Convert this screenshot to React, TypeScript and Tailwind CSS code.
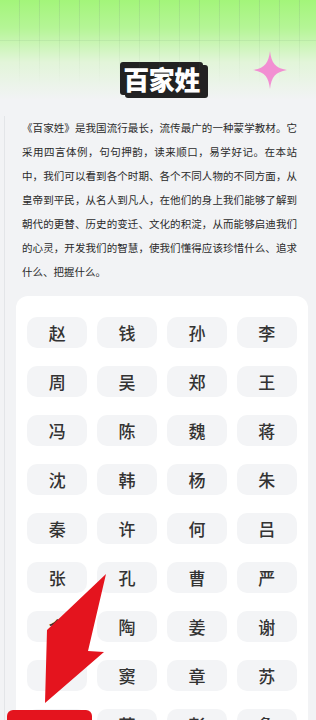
const surnames = [
  "赵", "钱", "孙", "李",
  "周", "吴", "郑", "王",
  "冯", "陈", "魏", "蒋",
  "沈", "韩", "杨", "朱",
  "秦", "许", "何", "吕",
  "张", "孔", "曹", "严",
  "金", "陶", "姜", "谢",
  "戚", "窦", "章", "苏",
  "范", "范", "彭", "鲁",
];

const introLines = [
  "《百家姓》是我国流行最长，流传最广的一种蒙学教材。它",
  "采用四言体例，句句押韵，读来顺口，易学好记。在本站",
  "中，我们可以看到各个时期、各个不同人物的不同方面，从",
  "皇帝到平民，从名人到凡人，在他们的身上我们能够了解到",
  "朝代的更替、历史的变迁、文化的积淀，从而能够启迪我们",
  "的心灵，开发我们的智慧，使我们懂得应该珍惜什么、追求",
];

function Sparkle() {
  return (
    <svg width="34" height="38" viewBox="0 0 34 38" className="absolute left-[253px] top-[51px]">
      <path d="M17 0 C18.5 12 22 17 34 19 C22 21 18.5 26 17 38 C15.5 26 12 21 0 19 C12 17 15.5 12 17 0 Z" fill="#f28fd2" />
    </svg>
  );
}

export default function App() {
  return (
    <div className="relative min-h-[720px] w-full overflow-hidden bg-[#f2f3f5] font-['Noto_Sans_CJK_SC','Noto_Sans',sans-serif] text-[#2b2b2b]">
      <div className="absolute left-[4px] top-0 h-full w-px bg-[#e3e5e8]" />
      <header className="relative h-[116px] bg-[linear-gradient(to_bottom,#a3f57a_0px,#b5f596_28px,#e2f5d9_62px,#f2f3f5_100px)]">
        <div className="absolute inset-x-0 top-0 h-[84px] bg-[repeating-linear-gradient(to_right,transparent_0px,transparent_19px,rgba(130,165,130,0.25)_19px,rgba(130,165,130,0.25)_20px)] [mask-image:linear-gradient(to_bottom,black,transparent)]" />
        <div className="absolute inset-x-0 top-[40px] h-px bg-[rgba(130,165,130,0.15)]" />
        <Sparkle />
        <div className="flex justify-center pl-[7px] pt-[62px]">
          <span className="rounded-[3px] bg-[#222] px-[3px] text-[26px] font-black leading-[33px] tracking-[-0.5px] text-white shadow-[5px_3px_0_#222]">
            百家姓
          </span>
        </div>
      </header>

      <section className="ml-[22px] mr-[19px] text-[10.5px] leading-[24px] text-[#2a2a2a]">
        {introLines.map(line => (
          <p key={line} className="text-justify [text-align-last:justify]">
            {line}
          </p>
        ))}
        <p>什么、把握什么。</p>
      </section>

      <section className="ml-4 mr-2 mt-[12px] rounded-[12px] bg-white px-[11px] pt-[21px] pb-4">
        <div className="grid grid-cols-4 gap-x-[9.5px] gap-y-[18px]">
          {surnames.map((name, i) => (
            <div
              key={i}
              className="flex h-[31px] items-center justify-center rounded-[10px] bg-[#f3f4f6] text-[17px] font-medium text-[#333]"
            >
              {name}
            </div>
          ))}
        </div>
      </section>

      <svg width="316" height="720" viewBox="0 0 316 720" className="pointer-events-none absolute left-0 top-0">
        <polygon points="106,574 88,651 104,652 45,703 47,630" fill="#e4141e" />
      </svg>
      <div className="absolute left-[7px] top-[710px] h-[20px] w-[85px] rounded-t-[6px] bg-[#e4141e]" />
    </div>
  );
}
